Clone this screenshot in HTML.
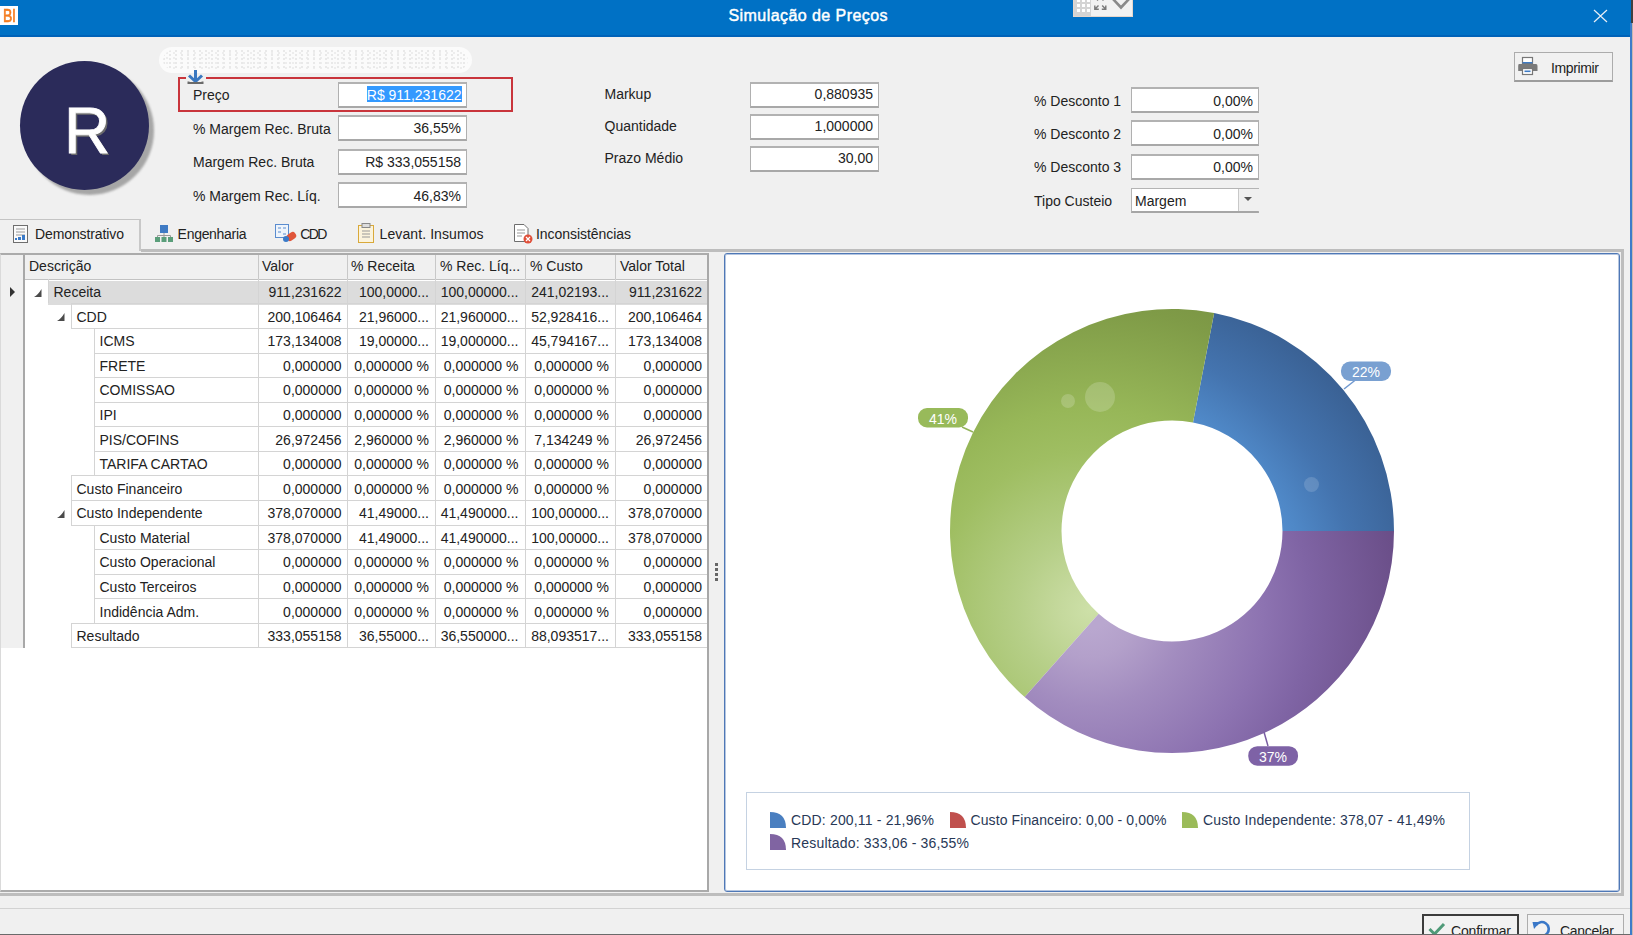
<!DOCTYPE html>
<html><head><meta charset="utf-8"><style>
html,body{margin:0;padding:0;}
body{width:1633px;height:935px;position:relative;overflow:hidden;background:#f0f0f0;font-family:"Liberation Sans",sans-serif;}
.t{position:absolute;white-space:nowrap;}
.fit{display:inline-block;}
</style></head><body>
<div style="position:absolute;left:0px;top:0px;width:1633px;height:35px;background:#0071c5;"></div>
<div style="position:absolute;left:0px;top:35px;width:1633px;height:2px;background:#0062b8;"></div>
<div style="position:absolute;left:0px;top:6px;width:18px;height:19px;background:#fff;"></div>
<div class="t" style="left:2.5px;top:5.5px;font-size:17.5px;line-height:20px;color:#f47c20;-webkit-text-stroke:0.6px #f47c20;letter-spacing:-0.5px;transform:scaleX(0.8);transform-origin:0 0;">BI</div>
<div class="t" style="left: 728.5px; top: 6.76px; font-size: 16px; line-height: 18.4px; color: rgb(255, 255, 255); font-weight: normal; -webkit-text-stroke: 0.45px rgb(255, 255, 255); letter-spacing: 0.434px;">Simulação de Preços</div>
<svg style="position:absolute;left:1073px;top:0px" width="60" height="17" viewBox="0 0 60 17">
<rect x="0.5" y="-1" width="59" height="17.5" fill="#f2f2f2" stroke="#e6d6cc"></rect>
<rect x="1" y="0" width="17" height="16" fill="#d4d4d4"></rect>
<g fill="#fff"><rect x="4" y="0" width="3" height="2"></rect><rect x="9" y="0" width="3" height="2"></rect><rect x="14" y="0" width="3" height="2"></rect>
<rect x="4" y="4" width="3" height="3"></rect><rect x="9" y="4" width="3" height="3"></rect><rect x="14" y="4" width="3" height="3"></rect>
<rect x="4" y="9" width="3" height="3"></rect><rect x="9" y="9" width="3" height="3"></rect><rect x="14" y="9" width="3" height="3"></rect></g>
<g stroke="#7a7a7a" stroke-width="1.4" fill="none"><path d="M21.8 -3 L25 0.5 M32.8 -3 L29.5 0.5 M21.8 5.5 V9.3 H25.8 M21.8 9.3 L25.5 5.6 M32.8 5.5 V9.3 H28.8 M32.8 9.3 L29.2 5.6"></path></g>
<path d="M40 -1 L48 7.5 L56 -1" stroke="#8a8a8a" stroke-width="2.6" fill="none"></path>
</svg>
<svg style="position:absolute;left:1593px;top:9px" width="15" height="14"><path d="M1 1 L14 13 M14 1 L1 13" stroke="#e8eef6" stroke-width="1.2"></path></svg>
<div style="position:absolute;left:1630px;top:23px;width:2px;height:912px;background:#3d7cc9;"></div>
<div style="position:absolute;left:1632px;top:23px;width:1px;height:912px;background:#c8b8b0;"></div>
<div style="position:absolute;left:1631px;top:0px;width:2px;height:23px;background:#404040;"></div>
<div style="position:absolute;left:24.5px;top:66px;width:129px;height:129px;border-radius:50%;background:#a6a6a6;filter:blur(1.2px);"></div>
<div style="position:absolute;left:20px;top:61px;width:129px;height:129px;border-radius:50%;background:#2b2b5a;"></div>
<div class="t" style="left:64px;top:95px;font-size:64px;line-height:72px;color:#fff;-webkit-text-stroke:0.8px #fff;text-shadow:2px 2px 0 #6c6c6c;">R</div>
<div style="position:absolute;left:159px;top:46.5px;width:313px;height:26px;border-radius:13px;background:#fbfbfb;"></div>
<div style="position:absolute;left:163px;top:50px;width:305px;height:20px;border-radius:10px;opacity:.18;background:radial-gradient(circle at 1px 1px,#9a9a9a 0.8px,transparent 1.2px) 0 0/6px 4px,radial-gradient(circle at 1px 1px,#b0b0b0 0.7px,transparent 1.1px) 3px 2px/7px 5px;"></div>
<div style="position:absolute;left:178px;top:77px;width:335px;height:35px;box-sizing:border-box;border:2px solid #c9353c;"></div>
<div style="position:absolute;left:186px;top:76px;width:20px;height:4px;background:#f0f0f0;"></div>
<svg style="position:absolute;left:186px;top:69px" width="19" height="17" viewBox="0 0 19 17"><path d="M9.5 1 V12" stroke="#3a78c0" stroke-width="3" fill="none"></path><path d="M3 6.5 L9.5 12.5 L16 6.5" stroke="#3a78c0" stroke-width="3" fill="none" stroke-linejoin="miter"></path><path d="M2.5 12.5 V14 H16.5 V12.5" stroke="#6a6a6a" stroke-width="2" fill="none"></path></svg>
<div class="t" style="left:193px;top:86.60px;font-size:14px;line-height:16.10px;color:#222222;font-weight:normal;">Preço</div>
<div class="t" style="left:193px;top:120.60px;font-size:14px;line-height:16.10px;color:#222222;font-weight:normal;">% Margem Rec. Bruta</div>
<div class="t" style="left:193px;top:154.10px;font-size:14px;line-height:16.10px;color:#222222;font-weight:normal;">Margem Rec. Bruta</div>
<div class="t" style="left:193px;top:188.10px;font-size:14px;line-height:16.10px;color:#222222;font-weight:normal;">% Margem Rec. Líq.</div>
<div style="position:absolute;left:338px;top:82px;width:129px;height:26px;box-sizing:border-box;background:#fff;border:1px solid #b0b0b0;border-top:2px solid #b2b2b2;border-bottom:2px solid #a8a8a8;"></div>
<div style="position:absolute;left:366.5px;top:85.5px;width:95.5px;height:16.5px;background:#3399ff;"></div>
<div class="t" style="right:1171.5px;top:86.60px;font-size:14px;line-height:16.10px;color:#ffffff;font-weight:normal;">R$ 911,231622</div>
<div style="position:absolute;left:338px;top:115px;width:129px;height:26px;box-sizing:border-box;background:#fff;border:1px solid #b0b0b0;border-top:2px solid #b2b2b2;border-bottom:2px solid #a8a8a8;"></div>
<div class="t" style="right:1172px;top:120.40px;font-size:14px;line-height:16.10px;color:#222222;font-weight:normal;">36,55%</div>
<div style="position:absolute;left:338px;top:149px;width:129px;height:26px;box-sizing:border-box;background:#fff;border:1px solid #b0b0b0;border-top:2px solid #b2b2b2;border-bottom:2px solid #a8a8a8;"></div>
<div class="t" style="right:1172px;top:154.10px;font-size:14px;line-height:16.10px;color:#222222;font-weight:normal;">R$ 333,055158</div>
<div style="position:absolute;left:338px;top:182px;width:129px;height:26px;box-sizing:border-box;background:#fff;border:1px solid #b0b0b0;border-top:2px solid #b2b2b2;border-bottom:2px solid #a8a8a8;"></div>
<div class="t" style="right:1172px;top:187.60px;font-size:14px;line-height:16.10px;color:#222222;font-weight:normal;">46,83%</div>
<div class="t" style="left:604.5px;top:86.30px;font-size:14px;line-height:16.10px;color:#222222;font-weight:normal;">Markup</div>
<div style="position:absolute;left:750px;top:82px;width:129px;height:26px;box-sizing:border-box;background:#fff;border:1px solid #b0b0b0;border-top:2px solid #b2b2b2;border-bottom:2px solid #a8a8a8;"></div>
<div class="t" style="right:760px;top:86.30px;font-size:14px;line-height:16.10px;color:#222222;font-weight:normal;">0,880935</div>
<div class="t" style="left:604.5px;top:118.40px;font-size:14px;line-height:16.10px;color:#222222;font-weight:normal;">Quantidade</div>
<div style="position:absolute;left:750px;top:114px;width:129px;height:26px;box-sizing:border-box;background:#fff;border:1px solid #b0b0b0;border-top:2px solid #b2b2b2;border-bottom:2px solid #a8a8a8;"></div>
<div class="t" style="right:760px;top:118.40px;font-size:14px;line-height:16.10px;color:#222222;font-weight:normal;">1,000000</div>
<div class="t" style="left:604.5px;top:150.10px;font-size:14px;line-height:16.10px;color:#222222;font-weight:normal;">Prazo Médio</div>
<div style="position:absolute;left:750px;top:146px;width:129px;height:26px;box-sizing:border-box;background:#fff;border:1px solid #b0b0b0;border-top:2px solid #b2b2b2;border-bottom:2px solid #a8a8a8;"></div>
<div class="t" style="right:760px;top:150.10px;font-size:14px;line-height:16.10px;color:#222222;font-weight:normal;">30,00</div>
<div class="t" style="left:1034px;top:92.50px;font-size:14px;line-height:16.10px;color:#222222;font-weight:normal;">% Desconto 1</div>
<div style="position:absolute;left:1131px;top:87px;width:128px;height:26px;box-sizing:border-box;background:#fff;border:1px solid #b0b0b0;border-top:2px solid #b2b2b2;border-bottom:2px solid #a8a8a8;"></div>
<div class="t" style="right:380px;top:92.50px;font-size:14px;line-height:16.10px;color:#222222;font-weight:normal;">0,00%</div>
<div class="t" style="left:1034px;top:125.90px;font-size:14px;line-height:16.10px;color:#222222;font-weight:normal;">% Desconto 2</div>
<div style="position:absolute;left:1131px;top:120px;width:128px;height:26px;box-sizing:border-box;background:#fff;border:1px solid #b0b0b0;border-top:2px solid #b2b2b2;border-bottom:2px solid #a8a8a8;"></div>
<div class="t" style="right:380px;top:125.90px;font-size:14px;line-height:16.10px;color:#222222;font-weight:normal;">0,00%</div>
<div class="t" style="left:1034px;top:159.10px;font-size:14px;line-height:16.10px;color:#222222;font-weight:normal;">% Desconto 3</div>
<div style="position:absolute;left:1131px;top:154px;width:128px;height:26px;box-sizing:border-box;background:#fff;border:1px solid #b0b0b0;border-top:2px solid #b2b2b2;border-bottom:2px solid #a8a8a8;"></div>
<div class="t" style="right:380px;top:159.10px;font-size:14px;line-height:16.10px;color:#222222;font-weight:normal;">0,00%</div>
<div class="t" style="left:1034px;top:192.50px;font-size:14px;line-height:16.10px;color:#222222;font-weight:normal;">Tipo Custeio</div>
<div style="position:absolute;left:1131px;top:188px;width:128px;height:25px;box-sizing:border-box;background:#fff;border:1px solid #b4b4b4;border-bottom:2px solid #a6a6a6;"></div>
<div style="position:absolute;left:1238px;top:189px;width:20px;height:22px;background:#f0f0f0;border-left:1px solid #c8c8c8;"></div>
<div class="t" style="left:1135px;top:192.50px;font-size:14px;line-height:16.10px;color:#222222;font-weight:normal;">Margem</div>
<svg style="position:absolute;left:1244px;top:197px" width="9" height="6"><path d="M0 0 H8 L4 4 Z" fill="#555"></path></svg>
<div style="position:absolute;left:1514px;top:52px;width:99px;height:30px;box-sizing:border-box;background:#f1f1f1;border:1px solid #acacac;border-bottom:2px solid #9c9c9c;"></div>
<svg style="position:absolute;left:1517px;top:56px" width="22" height="20" viewBox="0 0 22 20">
<rect x="5.5" y="1.5" width="10" height="6" fill="#fff" stroke="#777" stroke-width="1.2"></rect>
<rect x="5.5" y="6" width="10" height="1.4" fill="#3e7bc4"></rect>
<path d="M2 8 H19 Q20.5 8 20.5 10 V15 H16 V13 H5 V15 H1.2 V10 Q1.2 8 2 8Z" fill="#7a7a7a"></path>
<rect x="5.5" y="12.5" width="10" height="6" fill="#fff" stroke="#777" stroke-width="1.2"></rect>
<rect x="7.5" y="14.5" width="6" height="1.6" fill="#3e7bc4"></rect>
</svg>
<div class="t" style="left: 1551px; top: 60.4px; font-size: 14px; line-height: 16.1px; color: rgb(34, 34, 34); font-weight: normal; letter-spacing: -0.364px;">Imprimir</div>
<div style="position:absolute;left:0px;top:219px;width:141px;height:32px;box-sizing:border-box;border-top:1px solid #c4c4c4;border-right:2px solid #c8c8c8;background:#f0f0f0;"></div>
<div style="position:absolute;left:141px;top:249px;width:1482px;height:3px;background:#bdbdbd;"></div>
<div style="position:absolute;left:1621px;top:249px;width:3px;height:646px;background:#bdbdbd;"></div>
<div style="position:absolute;left:0px;top:893px;width:1624px;height:3px;background:#bdbdbd;"></div>
<div class="t" style="left: 35px; top: 225.6px; font-size: 14px; line-height: 16.1px; color: rgb(34, 34, 34); font-weight: normal; letter-spacing: -0.105px;">Demonstrativo</div>
<div class="t" style="left: 177.6px; top: 225.6px; font-size: 14px; line-height: 16.1px; color: rgb(34, 34, 34); font-weight: normal; letter-spacing: -0.292px;">Engenharia</div>
<div class="t" style="left: 300.3px; top: 225.6px; font-size: 14px; line-height: 16.1px; color: rgb(34, 34, 34); font-weight: normal; letter-spacing: -1.672px;">CDD</div>
<div class="t" style="left: 379.6px; top: 225.6px; font-size: 14px; line-height: 16.1px; color: rgb(34, 34, 34); font-weight: normal; letter-spacing: 0.09px;">Levant. Insumos</div>
<div class="t" style="left: 536px; top: 225.6px; font-size: 14px; line-height: 16.1px; color: rgb(34, 34, 34); font-weight: normal; letter-spacing: -0.051px;">Inconsistências</div>
<svg style="position:absolute;left:13px;top:225px" width="16" height="18"><rect x="0.5" y="0.5" width="14" height="17" fill="#fafafa" stroke="#6e6e6e"></rect><path d="M3 4H12M3 7H12M3 10H12" stroke="#9a9a9a"></path><rect x="2" y="13" width="2" height="2" fill="#3a7ac8"></rect><rect x="5" y="12" width="3" height="3" fill="#3a7ac8"></rect><rect x="9" y="10" width="3" height="5" fill="#3a7ac8"></rect></svg>
<svg style="position:absolute;left:155px;top:225px" width="18" height="18"><rect x="5" y="0" width="8" height="8" fill="#3f7bc4"></rect><path d="M9 8V10.5 M2.5 12V10.5H15.5V12 M9 10.5V12" stroke="#9a9a9a" fill="none"></path><rect x="0" y="12" width="5" height="5" fill="#5a9e7a"></rect><rect x="6.5" y="12" width="5" height="5" fill="#5a9e7a"></rect><rect x="13" y="12" width="5" height="5" fill="#5a9e7a"></rect></svg>
<svg style="position:absolute;left:275px;top:224px" width="23" height="20"><rect x="0.5" y="0.5" width="13" height="13" fill="#eef4fb" stroke="#5a8ccf"></rect><path d="M3 4h3M8 4h3M3 8h3M8 10h3" stroke="#5a8ccf"></path><rect x="11" y="9" width="10" height="7" rx="3" transform="rotate(-35 16 12)" fill="#e0553a"></rect><circle cx="11" cy="15" r="3" fill="#3a7ac8"></circle></svg>
<svg style="position:absolute;left:358px;top:223px" width="17" height="20"><rect x="0.5" y="2.5" width="15" height="17" fill="#fbf3dc" stroke="#d9a93a"></rect><rect x="4" y="0.5" width="8" height="4" fill="#ddd" stroke="#888"></rect><path d="M4 8H12M4 11H12M4 14H12" stroke="#999"></path></svg>
<svg style="position:absolute;left:514px;top:224px" width="20" height="20"><path d="M0.5 0.5H10L14 4.5V17.5H0.5Z" fill="#fff" stroke="#6e6e6e"></path><path d="M3 6H11M3 9H11M3 12H8" stroke="#999"></path><circle cx="14" cy="15" r="4.5" fill="#e0503a"></circle><path d="M12 13L16 17M16 13L12 17" stroke="#fff" stroke-width="1.2"></path></svg>
<div style="position:absolute;left:0px;top:253px;width:709px;height:639px;box-sizing:border-box;background:#fff;border:2px solid #ababab;border-left:1px solid #dadada;border-right:2px solid #a8a8a8;"></div>
<div style="position:absolute;left:1px;top:255px;width:706px;height:24.5px;background:#f0f0f0;"></div>
<div style="position:absolute;left:1px;top:279px;width:706px;height:1px;background:#c2c2c2;"></div>
<div style="position:absolute;left:1px;top:255px;width:22px;height:393px;background:#f0f0f0;"></div>
<div style="position:absolute;left:23px;top:255px;width:2px;height:393px;background:#a8a8a8;"></div>
<div style="position:absolute;left:257.5px;top:255px;width:1.0px;height:24px;background:#c8c8c8;"></div>
<div style="position:absolute;left:346.5px;top:255px;width:1.0px;height:24px;background:#c8c8c8;"></div>
<div style="position:absolute;left:434.5px;top:255px;width:1.0px;height:24px;background:#c8c8c8;"></div>
<div style="position:absolute;left:524.5px;top:255px;width:1.0px;height:24px;background:#c8c8c8;"></div>
<div style="position:absolute;left:614.5px;top:255px;width:1.0px;height:24px;background:#c8c8c8;"></div>
<div class="t" style="left:29px;top:257.60px;font-size:14px;line-height:16.10px;color:#222222;font-weight:normal;">Descrição</div>
<div class="t" style="left:262px;top:257.60px;font-size:14px;line-height:16.10px;color:#222222;font-weight:normal;">Valor</div>
<div class="t" style="left:351px;top:257.60px;font-size:14px;line-height:16.10px;color:#222222;font-weight:normal;">% Receita</div>
<div class="t" style="left:440px;top:257.60px;font-size:14px;line-height:16.10px;color:#222222;font-weight:normal;">% Rec. Líq...</div>
<div class="t" style="left:530px;top:257.60px;font-size:14px;line-height:16.10px;color:#222222;font-weight:normal;">% Custo</div>
<div class="t" style="left:620px;top:257.60px;font-size:14px;line-height:16.10px;color:#222222;font-weight:normal;">Valor Total</div>
<div style="position:absolute;left:48px;top:281px;width:659px;height:24px;background:#dcdcdc;"></div>
<div style="position:absolute;left:48px;top:279px;width:1px;height:24px;background:#d4d4d4;"></div>
<div style="position:absolute;left:257.5px;top:279px;width:1.0px;height:24px;background:#d4d4d4;"></div>
<div style="position:absolute;left:346.5px;top:279px;width:1.0px;height:24px;background:#d4d4d4;"></div>
<div style="position:absolute;left:434.5px;top:279px;width:1.0px;height:24px;background:#d4d4d4;"></div>
<div style="position:absolute;left:524.5px;top:279px;width:1.0px;height:24px;background:#d4d4d4;"></div>
<div style="position:absolute;left:614.5px;top:279px;width:1.0px;height:24px;background:#d4d4d4;"></div>
<div class="t" style="left:53.5px;top:284.20px;font-size:14px;line-height:16.10px;color:#222222;font-weight:normal;">Receita</div>
<div class="t" style="right:1291.5px;top:284.20px;font-size:14px;line-height:16.10px;color:#222222;font-weight:normal;">911,231622</div>
<div class="t" style="right:1204px;top:284.20px;font-size:14px;line-height:16.10px;color:#222222;font-weight:normal;">100,0000...</div>
<div class="t" style="right:1114.5px;top:284.20px;font-size:14px;line-height:16.10px;color:#222222;font-weight:normal;">100,00000...</div>
<div class="t" style="right:1024px;top:284.20px;font-size:14px;line-height:16.10px;color:#222222;font-weight:normal;">241,02193...</div>
<div class="t" style="right:931px;top:284.20px;font-size:14px;line-height:16.10px;color:#222222;font-weight:normal;">911,231622</div>
<svg style="position:absolute;left:34px;top:288.90px" width="9" height="9"><path d="M7.5 0 V8 H0 Q4 6 7.5 0 Z" fill="#4a4a4a"></path></svg>
<div style="position:absolute;left:71px;top:328px;width:636px;height:1px;background:#d4d4d4;"></div>
<div style="position:absolute;left:71px;top:303px;width:636px;height:1px;background:#d4d4d4;"></div>
<div style="position:absolute;left:71px;top:303px;width:1px;height:25px;background:#d4d4d4;"></div>
<div style="position:absolute;left:257.5px;top:303px;width:1.0px;height:25px;background:#d4d4d4;"></div>
<div style="position:absolute;left:346.5px;top:303px;width:1.0px;height:25px;background:#d4d4d4;"></div>
<div style="position:absolute;left:434.5px;top:303px;width:1.0px;height:25px;background:#d4d4d4;"></div>
<div style="position:absolute;left:524.5px;top:303px;width:1.0px;height:25px;background:#d4d4d4;"></div>
<div style="position:absolute;left:614.5px;top:303px;width:1.0px;height:25px;background:#d4d4d4;"></div>
<div class="t" style="left:76.5px;top:308.77px;font-size:14px;line-height:16.10px;color:#222222;font-weight:normal;">CDD</div>
<div class="t" style="right:1291.5px;top:308.77px;font-size:14px;line-height:16.10px;color:#222222;font-weight:normal;">200,106464</div>
<div class="t" style="right:1204px;top:308.77px;font-size:14px;line-height:16.10px;color:#222222;font-weight:normal;">21,96000...</div>
<div class="t" style="right:1114.5px;top:308.77px;font-size:14px;line-height:16.10px;color:#222222;font-weight:normal;">21,960000...</div>
<div class="t" style="right:1024px;top:308.77px;font-size:14px;line-height:16.10px;color:#222222;font-weight:normal;">52,928416...</div>
<div class="t" style="right:931px;top:308.77px;font-size:14px;line-height:16.10px;color:#222222;font-weight:normal;">200,106464</div>
<svg style="position:absolute;left:57px;top:313.47px" width="9" height="9"><path d="M7.5 0 V8 H0 Q4 6 7.5 0 Z" fill="#4a4a4a"></path></svg>
<div style="position:absolute;left:94px;top:353px;width:613px;height:1px;background:#d4d4d4;"></div>
<div style="position:absolute;left:94px;top:328px;width:613px;height:1px;background:#d4d4d4;"></div>
<div style="position:absolute;left:94px;top:328px;width:1px;height:25px;background:#d4d4d4;"></div>
<div style="position:absolute;left:257.5px;top:328px;width:1.0px;height:25px;background:#d4d4d4;"></div>
<div style="position:absolute;left:346.5px;top:328px;width:1.0px;height:25px;background:#d4d4d4;"></div>
<div style="position:absolute;left:434.5px;top:328px;width:1.0px;height:25px;background:#d4d4d4;"></div>
<div style="position:absolute;left:524.5px;top:328px;width:1.0px;height:25px;background:#d4d4d4;"></div>
<div style="position:absolute;left:614.5px;top:328px;width:1.0px;height:25px;background:#d4d4d4;"></div>
<div class="t" style="left:99.5px;top:333.34px;font-size:14px;line-height:16.10px;color:#222222;font-weight:normal;">ICMS</div>
<div class="t" style="right:1291.5px;top:333.34px;font-size:14px;line-height:16.10px;color:#222222;font-weight:normal;">173,134008</div>
<div class="t" style="right:1204px;top:333.34px;font-size:14px;line-height:16.10px;color:#222222;font-weight:normal;">19,00000...</div>
<div class="t" style="right:1114.5px;top:333.34px;font-size:14px;line-height:16.10px;color:#222222;font-weight:normal;">19,000000...</div>
<div class="t" style="right:1024px;top:333.34px;font-size:14px;line-height:16.10px;color:#222222;font-weight:normal;">45,794167...</div>
<div class="t" style="right:931px;top:333.34px;font-size:14px;line-height:16.10px;color:#222222;font-weight:normal;">173,134008</div>
<div style="position:absolute;left:94px;top:377px;width:613px;height:1px;background:#d4d4d4;"></div>
<div style="position:absolute;left:94px;top:353px;width:613px;height:1px;background:#d4d4d4;"></div>
<div style="position:absolute;left:94px;top:353px;width:1px;height:24px;background:#d4d4d4;"></div>
<div style="position:absolute;left:257.5px;top:353px;width:1.0px;height:24px;background:#d4d4d4;"></div>
<div style="position:absolute;left:346.5px;top:353px;width:1.0px;height:24px;background:#d4d4d4;"></div>
<div style="position:absolute;left:434.5px;top:353px;width:1.0px;height:24px;background:#d4d4d4;"></div>
<div style="position:absolute;left:524.5px;top:353px;width:1.0px;height:24px;background:#d4d4d4;"></div>
<div style="position:absolute;left:614.5px;top:353px;width:1.0px;height:24px;background:#d4d4d4;"></div>
<div class="t" style="left:99.5px;top:357.91px;font-size:14px;line-height:16.10px;color:#222222;font-weight:normal;">FRETE</div>
<div class="t" style="right:1291.5px;top:357.91px;font-size:14px;line-height:16.10px;color:#222222;font-weight:normal;">0,000000</div>
<div class="t" style="right:1204px;top:357.91px;font-size:14px;line-height:16.10px;color:#222222;font-weight:normal;">0,000000 %</div>
<div class="t" style="right:1114.5px;top:357.91px;font-size:14px;line-height:16.10px;color:#222222;font-weight:normal;">0,000000 %</div>
<div class="t" style="right:1024px;top:357.91px;font-size:14px;line-height:16.10px;color:#222222;font-weight:normal;">0,000000 %</div>
<div class="t" style="right:931px;top:357.91px;font-size:14px;line-height:16.10px;color:#222222;font-weight:normal;">0,000000</div>
<div style="position:absolute;left:94px;top:402px;width:613px;height:1px;background:#d4d4d4;"></div>
<div style="position:absolute;left:94px;top:377px;width:613px;height:1px;background:#d4d4d4;"></div>
<div style="position:absolute;left:94px;top:377px;width:1px;height:25px;background:#d4d4d4;"></div>
<div style="position:absolute;left:257.5px;top:377px;width:1.0px;height:25px;background:#d4d4d4;"></div>
<div style="position:absolute;left:346.5px;top:377px;width:1.0px;height:25px;background:#d4d4d4;"></div>
<div style="position:absolute;left:434.5px;top:377px;width:1.0px;height:25px;background:#d4d4d4;"></div>
<div style="position:absolute;left:524.5px;top:377px;width:1.0px;height:25px;background:#d4d4d4;"></div>
<div style="position:absolute;left:614.5px;top:377px;width:1.0px;height:25px;background:#d4d4d4;"></div>
<div class="t" style="left:99.5px;top:382.48px;font-size:14px;line-height:16.10px;color:#222222;font-weight:normal;">COMISSAO</div>
<div class="t" style="right:1291.5px;top:382.48px;font-size:14px;line-height:16.10px;color:#222222;font-weight:normal;">0,000000</div>
<div class="t" style="right:1204px;top:382.48px;font-size:14px;line-height:16.10px;color:#222222;font-weight:normal;">0,000000 %</div>
<div class="t" style="right:1114.5px;top:382.48px;font-size:14px;line-height:16.10px;color:#222222;font-weight:normal;">0,000000 %</div>
<div class="t" style="right:1024px;top:382.48px;font-size:14px;line-height:16.10px;color:#222222;font-weight:normal;">0,000000 %</div>
<div class="t" style="right:931px;top:382.48px;font-size:14px;line-height:16.10px;color:#222222;font-weight:normal;">0,000000</div>
<div style="position:absolute;left:94px;top:426px;width:613px;height:1px;background:#d4d4d4;"></div>
<div style="position:absolute;left:94px;top:402px;width:613px;height:1px;background:#d4d4d4;"></div>
<div style="position:absolute;left:94px;top:402px;width:1px;height:24px;background:#d4d4d4;"></div>
<div style="position:absolute;left:257.5px;top:402px;width:1.0px;height:24px;background:#d4d4d4;"></div>
<div style="position:absolute;left:346.5px;top:402px;width:1.0px;height:24px;background:#d4d4d4;"></div>
<div style="position:absolute;left:434.5px;top:402px;width:1.0px;height:24px;background:#d4d4d4;"></div>
<div style="position:absolute;left:524.5px;top:402px;width:1.0px;height:24px;background:#d4d4d4;"></div>
<div style="position:absolute;left:614.5px;top:402px;width:1.0px;height:24px;background:#d4d4d4;"></div>
<div class="t" style="left:99.5px;top:407.05px;font-size:14px;line-height:16.10px;color:#222222;font-weight:normal;">IPI</div>
<div class="t" style="right:1291.5px;top:407.05px;font-size:14px;line-height:16.10px;color:#222222;font-weight:normal;">0,000000</div>
<div class="t" style="right:1204px;top:407.05px;font-size:14px;line-height:16.10px;color:#222222;font-weight:normal;">0,000000 %</div>
<div class="t" style="right:1114.5px;top:407.05px;font-size:14px;line-height:16.10px;color:#222222;font-weight:normal;">0,000000 %</div>
<div class="t" style="right:1024px;top:407.05px;font-size:14px;line-height:16.10px;color:#222222;font-weight:normal;">0,000000 %</div>
<div class="t" style="right:931px;top:407.05px;font-size:14px;line-height:16.10px;color:#222222;font-weight:normal;">0,000000</div>
<div style="position:absolute;left:94px;top:451px;width:613px;height:1px;background:#d4d4d4;"></div>
<div style="position:absolute;left:94px;top:426px;width:613px;height:1px;background:#d4d4d4;"></div>
<div style="position:absolute;left:94px;top:426px;width:1px;height:25px;background:#d4d4d4;"></div>
<div style="position:absolute;left:257.5px;top:426px;width:1.0px;height:25px;background:#d4d4d4;"></div>
<div style="position:absolute;left:346.5px;top:426px;width:1.0px;height:25px;background:#d4d4d4;"></div>
<div style="position:absolute;left:434.5px;top:426px;width:1.0px;height:25px;background:#d4d4d4;"></div>
<div style="position:absolute;left:524.5px;top:426px;width:1.0px;height:25px;background:#d4d4d4;"></div>
<div style="position:absolute;left:614.5px;top:426px;width:1.0px;height:25px;background:#d4d4d4;"></div>
<div class="t" style="left:99.5px;top:431.62px;font-size:14px;line-height:16.10px;color:#222222;font-weight:normal;">PIS/COFINS</div>
<div class="t" style="right:1291.5px;top:431.62px;font-size:14px;line-height:16.10px;color:#222222;font-weight:normal;">26,972456</div>
<div class="t" style="right:1204px;top:431.62px;font-size:14px;line-height:16.10px;color:#222222;font-weight:normal;">2,960000 %</div>
<div class="t" style="right:1114.5px;top:431.62px;font-size:14px;line-height:16.10px;color:#222222;font-weight:normal;">2,960000 %</div>
<div class="t" style="right:1024px;top:431.62px;font-size:14px;line-height:16.10px;color:#222222;font-weight:normal;">7,134249 %</div>
<div class="t" style="right:931px;top:431.62px;font-size:14px;line-height:16.10px;color:#222222;font-weight:normal;">26,972456</div>
<div style="position:absolute;left:94px;top:475px;width:613px;height:1px;background:#d4d4d4;"></div>
<div style="position:absolute;left:94px;top:451px;width:613px;height:1px;background:#d4d4d4;"></div>
<div style="position:absolute;left:94px;top:451px;width:1px;height:24px;background:#d4d4d4;"></div>
<div style="position:absolute;left:257.5px;top:451px;width:1.0px;height:24px;background:#d4d4d4;"></div>
<div style="position:absolute;left:346.5px;top:451px;width:1.0px;height:24px;background:#d4d4d4;"></div>
<div style="position:absolute;left:434.5px;top:451px;width:1.0px;height:24px;background:#d4d4d4;"></div>
<div style="position:absolute;left:524.5px;top:451px;width:1.0px;height:24px;background:#d4d4d4;"></div>
<div style="position:absolute;left:614.5px;top:451px;width:1.0px;height:24px;background:#d4d4d4;"></div>
<div class="t" style="left:99.5px;top:456.19px;font-size:14px;line-height:16.10px;color:#222222;font-weight:normal;">TARIFA CARTAO</div>
<div class="t" style="right:1291.5px;top:456.19px;font-size:14px;line-height:16.10px;color:#222222;font-weight:normal;">0,000000</div>
<div class="t" style="right:1204px;top:456.19px;font-size:14px;line-height:16.10px;color:#222222;font-weight:normal;">0,000000 %</div>
<div class="t" style="right:1114.5px;top:456.19px;font-size:14px;line-height:16.10px;color:#222222;font-weight:normal;">0,000000 %</div>
<div class="t" style="right:1024px;top:456.19px;font-size:14px;line-height:16.10px;color:#222222;font-weight:normal;">0,000000 %</div>
<div class="t" style="right:931px;top:456.19px;font-size:14px;line-height:16.10px;color:#222222;font-weight:normal;">0,000000</div>
<div style="position:absolute;left:71px;top:500px;width:636px;height:1px;background:#d4d4d4;"></div>
<div style="position:absolute;left:71px;top:475px;width:636px;height:1px;background:#d4d4d4;"></div>
<div style="position:absolute;left:71px;top:475px;width:1px;height:25px;background:#d4d4d4;"></div>
<div style="position:absolute;left:257.5px;top:475px;width:1.0px;height:25px;background:#d4d4d4;"></div>
<div style="position:absolute;left:346.5px;top:475px;width:1.0px;height:25px;background:#d4d4d4;"></div>
<div style="position:absolute;left:434.5px;top:475px;width:1.0px;height:25px;background:#d4d4d4;"></div>
<div style="position:absolute;left:524.5px;top:475px;width:1.0px;height:25px;background:#d4d4d4;"></div>
<div style="position:absolute;left:614.5px;top:475px;width:1.0px;height:25px;background:#d4d4d4;"></div>
<div class="t" style="left:76.5px;top:480.76px;font-size:14px;line-height:16.10px;color:#222222;font-weight:normal;">Custo Financeiro</div>
<div class="t" style="right:1291.5px;top:480.76px;font-size:14px;line-height:16.10px;color:#222222;font-weight:normal;">0,000000</div>
<div class="t" style="right:1204px;top:480.76px;font-size:14px;line-height:16.10px;color:#222222;font-weight:normal;">0,000000 %</div>
<div class="t" style="right:1114.5px;top:480.76px;font-size:14px;line-height:16.10px;color:#222222;font-weight:normal;">0,000000 %</div>
<div class="t" style="right:1024px;top:480.76px;font-size:14px;line-height:16.10px;color:#222222;font-weight:normal;">0,000000 %</div>
<div class="t" style="right:931px;top:480.76px;font-size:14px;line-height:16.10px;color:#222222;font-weight:normal;">0,000000</div>
<div style="position:absolute;left:71px;top:525px;width:636px;height:1px;background:#d4d4d4;"></div>
<div style="position:absolute;left:71px;top:500px;width:636px;height:1px;background:#d4d4d4;"></div>
<div style="position:absolute;left:71px;top:500px;width:1px;height:25px;background:#d4d4d4;"></div>
<div style="position:absolute;left:257.5px;top:500px;width:1.0px;height:25px;background:#d4d4d4;"></div>
<div style="position:absolute;left:346.5px;top:500px;width:1.0px;height:25px;background:#d4d4d4;"></div>
<div style="position:absolute;left:434.5px;top:500px;width:1.0px;height:25px;background:#d4d4d4;"></div>
<div style="position:absolute;left:524.5px;top:500px;width:1.0px;height:25px;background:#d4d4d4;"></div>
<div style="position:absolute;left:614.5px;top:500px;width:1.0px;height:25px;background:#d4d4d4;"></div>
<div class="t" style="left:76.5px;top:505.33px;font-size:14px;line-height:16.10px;color:#222222;font-weight:normal;">Custo Independente</div>
<div class="t" style="right:1291.5px;top:505.33px;font-size:14px;line-height:16.10px;color:#222222;font-weight:normal;">378,070000</div>
<div class="t" style="right:1204px;top:505.33px;font-size:14px;line-height:16.10px;color:#222222;font-weight:normal;">41,49000...</div>
<div class="t" style="right:1114.5px;top:505.33px;font-size:14px;line-height:16.10px;color:#222222;font-weight:normal;">41,490000...</div>
<div class="t" style="right:1024px;top:505.33px;font-size:14px;line-height:16.10px;color:#222222;font-weight:normal;">100,00000...</div>
<div class="t" style="right:931px;top:505.33px;font-size:14px;line-height:16.10px;color:#222222;font-weight:normal;">378,070000</div>
<svg style="position:absolute;left:57px;top:510.03px" width="9" height="9"><path d="M7.5 0 V8 H0 Q4 6 7.5 0 Z" fill="#4a4a4a"></path></svg>
<div style="position:absolute;left:94px;top:549px;width:613px;height:1px;background:#d4d4d4;"></div>
<div style="position:absolute;left:94px;top:525px;width:613px;height:1px;background:#d4d4d4;"></div>
<div style="position:absolute;left:94px;top:525px;width:1px;height:24px;background:#d4d4d4;"></div>
<div style="position:absolute;left:257.5px;top:525px;width:1.0px;height:24px;background:#d4d4d4;"></div>
<div style="position:absolute;left:346.5px;top:525px;width:1.0px;height:24px;background:#d4d4d4;"></div>
<div style="position:absolute;left:434.5px;top:525px;width:1.0px;height:24px;background:#d4d4d4;"></div>
<div style="position:absolute;left:524.5px;top:525px;width:1.0px;height:24px;background:#d4d4d4;"></div>
<div style="position:absolute;left:614.5px;top:525px;width:1.0px;height:24px;background:#d4d4d4;"></div>
<div class="t" style="left:99.5px;top:529.90px;font-size:14px;line-height:16.10px;color:#222222;font-weight:normal;">Custo Material</div>
<div class="t" style="right:1291.5px;top:529.90px;font-size:14px;line-height:16.10px;color:#222222;font-weight:normal;">378,070000</div>
<div class="t" style="right:1204px;top:529.90px;font-size:14px;line-height:16.10px;color:#222222;font-weight:normal;">41,49000...</div>
<div class="t" style="right:1114.5px;top:529.90px;font-size:14px;line-height:16.10px;color:#222222;font-weight:normal;">41,490000...</div>
<div class="t" style="right:1024px;top:529.90px;font-size:14px;line-height:16.10px;color:#222222;font-weight:normal;">100,00000...</div>
<div class="t" style="right:931px;top:529.90px;font-size:14px;line-height:16.10px;color:#222222;font-weight:normal;">378,070000</div>
<div style="position:absolute;left:94px;top:574px;width:613px;height:1px;background:#d4d4d4;"></div>
<div style="position:absolute;left:94px;top:549px;width:613px;height:1px;background:#d4d4d4;"></div>
<div style="position:absolute;left:94px;top:549px;width:1px;height:25px;background:#d4d4d4;"></div>
<div style="position:absolute;left:257.5px;top:549px;width:1.0px;height:25px;background:#d4d4d4;"></div>
<div style="position:absolute;left:346.5px;top:549px;width:1.0px;height:25px;background:#d4d4d4;"></div>
<div style="position:absolute;left:434.5px;top:549px;width:1.0px;height:25px;background:#d4d4d4;"></div>
<div style="position:absolute;left:524.5px;top:549px;width:1.0px;height:25px;background:#d4d4d4;"></div>
<div style="position:absolute;left:614.5px;top:549px;width:1.0px;height:25px;background:#d4d4d4;"></div>
<div class="t" style="left:99.5px;top:554.47px;font-size:14px;line-height:16.10px;color:#222222;font-weight:normal;">Custo Operacional</div>
<div class="t" style="right:1291.5px;top:554.47px;font-size:14px;line-height:16.10px;color:#222222;font-weight:normal;">0,000000</div>
<div class="t" style="right:1204px;top:554.47px;font-size:14px;line-height:16.10px;color:#222222;font-weight:normal;">0,000000 %</div>
<div class="t" style="right:1114.5px;top:554.47px;font-size:14px;line-height:16.10px;color:#222222;font-weight:normal;">0,000000 %</div>
<div class="t" style="right:1024px;top:554.47px;font-size:14px;line-height:16.10px;color:#222222;font-weight:normal;">0,000000 %</div>
<div class="t" style="right:931px;top:554.47px;font-size:14px;line-height:16.10px;color:#222222;font-weight:normal;">0,000000</div>
<div style="position:absolute;left:94px;top:598px;width:613px;height:1px;background:#d4d4d4;"></div>
<div style="position:absolute;left:94px;top:574px;width:613px;height:1px;background:#d4d4d4;"></div>
<div style="position:absolute;left:94px;top:574px;width:1px;height:24px;background:#d4d4d4;"></div>
<div style="position:absolute;left:257.5px;top:574px;width:1.0px;height:24px;background:#d4d4d4;"></div>
<div style="position:absolute;left:346.5px;top:574px;width:1.0px;height:24px;background:#d4d4d4;"></div>
<div style="position:absolute;left:434.5px;top:574px;width:1.0px;height:24px;background:#d4d4d4;"></div>
<div style="position:absolute;left:524.5px;top:574px;width:1.0px;height:24px;background:#d4d4d4;"></div>
<div style="position:absolute;left:614.5px;top:574px;width:1.0px;height:24px;background:#d4d4d4;"></div>
<div class="t" style="left:99.5px;top:579.04px;font-size:14px;line-height:16.10px;color:#222222;font-weight:normal;">Custo Terceiros</div>
<div class="t" style="right:1291.5px;top:579.04px;font-size:14px;line-height:16.10px;color:#222222;font-weight:normal;">0,000000</div>
<div class="t" style="right:1204px;top:579.04px;font-size:14px;line-height:16.10px;color:#222222;font-weight:normal;">0,000000 %</div>
<div class="t" style="right:1114.5px;top:579.04px;font-size:14px;line-height:16.10px;color:#222222;font-weight:normal;">0,000000 %</div>
<div class="t" style="right:1024px;top:579.04px;font-size:14px;line-height:16.10px;color:#222222;font-weight:normal;">0,000000 %</div>
<div class="t" style="right:931px;top:579.04px;font-size:14px;line-height:16.10px;color:#222222;font-weight:normal;">0,000000</div>
<div style="position:absolute;left:94px;top:623px;width:613px;height:1px;background:#d4d4d4;"></div>
<div style="position:absolute;left:94px;top:598px;width:613px;height:1px;background:#d4d4d4;"></div>
<div style="position:absolute;left:94px;top:598px;width:1px;height:25px;background:#d4d4d4;"></div>
<div style="position:absolute;left:257.5px;top:598px;width:1.0px;height:25px;background:#d4d4d4;"></div>
<div style="position:absolute;left:346.5px;top:598px;width:1.0px;height:25px;background:#d4d4d4;"></div>
<div style="position:absolute;left:434.5px;top:598px;width:1.0px;height:25px;background:#d4d4d4;"></div>
<div style="position:absolute;left:524.5px;top:598px;width:1.0px;height:25px;background:#d4d4d4;"></div>
<div style="position:absolute;left:614.5px;top:598px;width:1.0px;height:25px;background:#d4d4d4;"></div>
<div class="t" style="left:99.5px;top:603.61px;font-size:14px;line-height:16.10px;color:#222222;font-weight:normal;">Indidência Adm.</div>
<div class="t" style="right:1291.5px;top:603.61px;font-size:14px;line-height:16.10px;color:#222222;font-weight:normal;">0,000000</div>
<div class="t" style="right:1204px;top:603.61px;font-size:14px;line-height:16.10px;color:#222222;font-weight:normal;">0,000000 %</div>
<div class="t" style="right:1114.5px;top:603.61px;font-size:14px;line-height:16.10px;color:#222222;font-weight:normal;">0,000000 %</div>
<div class="t" style="right:1024px;top:603.61px;font-size:14px;line-height:16.10px;color:#222222;font-weight:normal;">0,000000 %</div>
<div class="t" style="right:931px;top:603.61px;font-size:14px;line-height:16.10px;color:#222222;font-weight:normal;">0,000000</div>
<div style="position:absolute;left:71px;top:647px;width:636px;height:1px;background:#d4d4d4;"></div>
<div style="position:absolute;left:71px;top:623px;width:636px;height:1px;background:#d4d4d4;"></div>
<div style="position:absolute;left:71px;top:623px;width:1px;height:24px;background:#d4d4d4;"></div>
<div style="position:absolute;left:257.5px;top:623px;width:1.0px;height:24px;background:#d4d4d4;"></div>
<div style="position:absolute;left:346.5px;top:623px;width:1.0px;height:24px;background:#d4d4d4;"></div>
<div style="position:absolute;left:434.5px;top:623px;width:1.0px;height:24px;background:#d4d4d4;"></div>
<div style="position:absolute;left:524.5px;top:623px;width:1.0px;height:24px;background:#d4d4d4;"></div>
<div style="position:absolute;left:614.5px;top:623px;width:1.0px;height:24px;background:#d4d4d4;"></div>
<div class="t" style="left:76.5px;top:628.18px;font-size:14px;line-height:16.10px;color:#222222;font-weight:normal;">Resultado</div>
<div class="t" style="right:1291.5px;top:628.18px;font-size:14px;line-height:16.10px;color:#222222;font-weight:normal;">333,055158</div>
<div class="t" style="right:1204px;top:628.18px;font-size:14px;line-height:16.10px;color:#222222;font-weight:normal;">36,55000...</div>
<div class="t" style="right:1114.5px;top:628.18px;font-size:14px;line-height:16.10px;color:#222222;font-weight:normal;">36,550000...</div>
<div class="t" style="right:1024px;top:628.18px;font-size:14px;line-height:16.10px;color:#222222;font-weight:normal;">88,093517...</div>
<div class="t" style="right:931px;top:628.18px;font-size:14px;line-height:16.10px;color:#222222;font-weight:normal;">333,055158</div>
<svg style="position:absolute;left:9px;top:286px" width="7" height="12"><path d="M1 1 L6 6 L1 11 Z" fill="#333"></path></svg>
<div style="position:absolute;left:715px;top:563px;width:2.5px;height:2.5px;background:#666;"></div>
<div style="position:absolute;left:715px;top:568px;width:2.5px;height:2.5px;background:#666;"></div>
<div style="position:absolute;left:715px;top:573px;width:2.5px;height:2.5px;background:#666;"></div>
<div style="position:absolute;left:715px;top:578px;width:2.5px;height:2.5px;background:#666;"></div>
<div style="position:absolute;left:724px;top:253px;width:896px;height:639px;box-sizing:border-box;background:#fff;border:1px solid #4f78b6;box-shadow:inset 0 0 0 1px rgba(90,128,187,.45);border-radius:3px;"></div>
<svg style="position:absolute;left:0;top:0" width="1633" height="935" viewBox="0 0 1633 935">
<defs>
<radialGradient id="gB" gradientUnits="userSpaceOnUse" cx="1090" cy="610" r="480"><stop offset="0.40" stop-color="#5791d1"></stop><stop offset="0.46" stop-color="#4f88c7"></stop><stop offset="0.56" stop-color="#4474af"></stop><stop offset="0.70" stop-color="#3a6194"></stop><stop offset="1" stop-color="#30507a"></stop></radialGradient>
<radialGradient id="gG" gradientUnits="userSpaceOnUse" cx="1090" cy="610" r="480"><stop offset="0" stop-color="#cde0a8"></stop><stop offset="0.06" stop-color="#c5d99d"></stop><stop offset="0.15" stop-color="#b6cf88"></stop><stop offset="0.33" stop-color="#9fbe62"></stop><stop offset="0.42" stop-color="#97b758"></stop><stop offset="0.63" stop-color="#7f9b47"></stop><stop offset="0.75" stop-color="#768f42"></stop></radialGradient>
<radialGradient id="gP" gradientUnits="userSpaceOnUse" cx="1090" cy="610" r="480"><stop offset="0.04" stop-color="#b9a7cf"></stop><stop offset="0.10" stop-color="#b3a0ca"></stop><stop offset="0.2" stop-color="#a28cbf"></stop><stop offset="0.36" stop-color="#8d73b1"></stop><stop offset="0.46" stop-color="#7f64a4"></stop><stop offset="0.65" stop-color="#6a4e88"></stop><stop offset="0.75" stop-color="#62467e"></stop></radialGradient>
</defs>
<path d="M1394.00 531.00 A222 222 0 0 0 1214.15 313.04 L1192.98 422.51 A110.5 110.5 0 0 1 1282.50 531.00 Z" fill="url(#gB)"></path>
<path d="M1214.15 313.04 A222 222 0 0 0 1024.67 697.06 L1098.67 613.66 A110.5 110.5 0 0 1 1192.98 422.51 Z" fill="url(#gG)"></path>
<path d="M1024.67 697.06 A222 222 0 0 0 1394.00 531.00 L1282.50 531.00 A110.5 110.5 0 0 1 1098.67 613.66 Z" fill="url(#gP)"></path>
<circle cx="1100" cy="397" r="15" fill="#fff" opacity="0.18"></circle>
<circle cx="1068" cy="401" r="7" fill="#fff" opacity="0.18"></circle>
<circle cx="1311.5" cy="484.5" r="7.5" fill="#fff" opacity="0.15"></circle>
<path d="M1344 389 L1358 378" stroke="#6f98cf" stroke-width="1.5"></path>
<path d="M962 427 L973 432" stroke="#93b45a" stroke-width="1.5"></path>
<path d="M1264 732 L1268 746" stroke="#7a5ea2" stroke-width="1.5"></path>
<rect x="1341" y="361.5" width="50" height="19.5" rx="9" fill="#79a0d1"></rect>
<rect x="918" y="408" width="50" height="19.5" rx="9" fill="#98ba5a"></rect>
<rect x="1248.3" y="746.2" width="49.7" height="19.5" rx="9" fill="#7e62a6"></rect>
</svg>
<div class="t" style="left:1352px;top:364.10px;font-size:14px;line-height:16.10px;color:#fff;font-weight:normal;">22%</div>
<div class="t" style="left:929px;top:411.10px;font-size:14px;line-height:16.10px;color:#fff;font-weight:normal;">41%</div>
<div class="t" style="left:1259px;top:749.10px;font-size:14px;line-height:16.10px;color:#fff;font-weight:normal;">37%</div>
<div style="position:absolute;left:746px;top:791.5px;width:724px;height:78.5px;box-sizing:border-box;border:1px solid #c5d2e2;background:#fff;"></div>
<svg style="position:absolute;left:770px;top:812px" width="16" height="16"><path d="M0 0 Q16 0 16 16 H0 Z" fill="#4a7fc0"></path></svg>
<div class="t" style="left: 791px; top: 812.3px; font-size: 14px; line-height: 16.1px; color: rgb(40, 56, 86); font-weight: normal; letter-spacing: 0.167px;">CDD: 200,11 - 21,96%</div>
<svg style="position:absolute;left:950px;top:812px" width="16" height="16"><path d="M0 0 Q16 0 16 16 H0 Z" fill="#c0504d"></path></svg>
<div class="t" style="left: 970.5px; top: 812.3px; font-size: 14px; line-height: 16.1px; color: rgb(40, 56, 86); font-weight: normal; letter-spacing: 0.103px;">Custo Financeiro: 0,00 - 0,00%</div>
<svg style="position:absolute;left:1182px;top:812px" width="16" height="16"><path d="M0 0 Q16 0 16 16 H0 Z" fill="#9bbb59"></path></svg>
<div class="t" style="left: 1203px; top: 812.3px; font-size: 14px; line-height: 16.1px; color: rgb(40, 56, 86); font-weight: normal; letter-spacing: 0.158px;">Custo Independente: 378,07 - 41,49%</div>
<svg style="position:absolute;left:770px;top:834px" width="16" height="16"><path d="M0 0 Q16 0 16 16 H0 Z" fill="#8064a2"></path></svg>
<div class="t" style="left: 791px; top: 835.1px; font-size: 14px; line-height: 16.1px; color: rgb(40, 56, 86); font-weight: normal; letter-spacing: 0.177px;">Resultado: 333,06 - 36,55%</div>
<div style="position:absolute;left:0px;top:908px;width:1630px;height:1px;background:#d2d2d2;"></div>
<div style="position:absolute;left:1422px;top:914px;width:97px;height:26px;box-sizing:border-box;background:#f2f2f2;border:2px solid #3c3c3c;"></div>
<div style="position:absolute;left:1527px;top:914px;width:97px;height:26px;box-sizing:border-box;background:#f2f2f2;border:1px solid #adadad;"></div>
<svg style="position:absolute;left:1428px;top:921px" width="18" height="16"><path d="M1.5 8 L6.5 13 L16 3" stroke="#4f9a78" stroke-width="3" fill="none"></path></svg>
<svg style="position:absolute;left:1532px;top:920px" width="20" height="18"><path d="M4 5 A7 7 0 1 1 6 15" stroke="#3a78c8" stroke-width="2.6" fill="none"></path><path d="M0.5 2 L8 2 L2 9 Z" fill="#3a78c8"></path></svg>
<div class="t" style="left: 1451px; top: 922.6px; font-size: 14px; line-height: 16.1px; color: rgb(34, 34, 34); font-weight: normal; letter-spacing: -0.184px;">Confirmar</div>
<div class="t" style="left: 1560px; top: 922.6px; font-size: 14px; line-height: 16.1px; color: rgb(34, 34, 34); font-weight: normal; letter-spacing: -0.29px;">Cancelar</div>
<div style="position:absolute;left:0px;top:933.5px;width:1630px;height:1.5px;background:#6a6a6a;"></div>

</body></html>
